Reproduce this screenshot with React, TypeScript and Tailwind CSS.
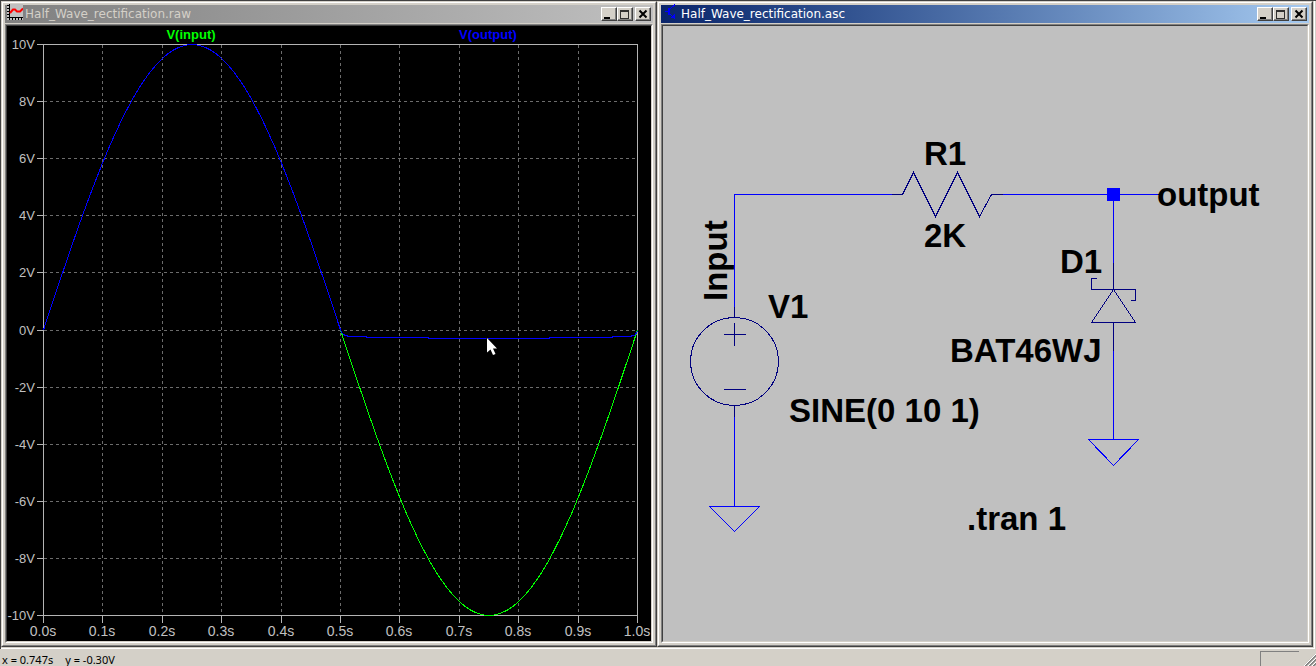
import React from 'react';

const X0 = 43;
const X1 = 637;
const Y0 = 44;
const Y1 = 615;

const timeTicks = Array.from({ length: 11 }, (_, i) => ({
  x: Math.round(X0 + ((X1 - X0) * i) / 10),
  label: `${(i / 10).toFixed(1)}s`,
}));

const voltTicks = Array.from({ length: 11 }, (_, i) => ({
  y: Math.round(Y0 + ((Y1 - Y0) * i) / 10),
  label: `${10 - 2 * i}V`,
}));

const sine = (from: number, to: number) => {
  const points: string[] = [];
  for (let i = from; i <= to; i++) {
    const x = X0 + ((X1 - X0) * i) / 100;
    const y = 329.5 - 285.5 * Math.sin((2 * Math.PI * i) / 100);
    points.push(`${x.toFixed(1)},${y.toFixed(1)}`);
  }
  return points.join(' ');
};

// once the diode conducts, the output is clamped just below 0V
const clamped =
  '341,332 343,334 345,335 349,336 366,336 366,337 428,337 428,338 549,338 549,337 612,337 612,336 628,336 634,335 637,331';

const PlotIcon: React.FC = () => (
  <svg viewBox="0 0 16 16" className="-mt-px h-4 w-4 shrink-0 self-start" shapeRendering="crispEdges" aria-hidden="true">
    <rect x="0" y="0" width="16" height="16" fill="#c0c0c0" />
    <path
      d="M2.5 0V14M2 13.5H16M0 1.5H2M0 4.5H2M0 7.5H2M0 10.5H2M0 13.5H2M2.5 14V16M5.5 14V16M8.5 14V16M11.5 14V16M14.5 14V16"
      stroke="#000"
      fill="none"
    />
    <path d="M3 9L6 5.5H8L10 7.5H13L16 4.5" stroke="#f00" strokeWidth="2" fill="none" shapeRendering="auto" />
  </svg>
);

const SchematicIcon: React.FC = () => (
  <svg viewBox="0 0 16 16" className="-mt-px h-4 w-4 shrink-0 self-start" shapeRendering="crispEdges" aria-hidden="true">
    <path d="M2 7.5H5M11.5 0V1L7 5M7 10L12 15" stroke="#00f" fill="none" />
    <path d="M6 4V11" stroke="#00f" strokeWidth="2" />
    <path d="M9 13H11V11Z" fill="#00f" stroke="#00f" />
  </svg>
);

const CaptionButton: React.FC<{ label: string; children: React.ReactNode }> = ({ label, children }) => (
  <button
    type="button"
    aria-label={label}
    className="h-[14px] w-4 border border-t-white border-l-white border-r-[#404040] border-b-[#404040] bg-[#d4d0c8] shadow-[inset_-1px_-1px_0_#808080]"
  >
    <svg viewBox="0 0 14 12" className="block h-3 w-[14px]" shapeRendering="crispEdges">
      {children}
    </svg>
  </button>
);

type WindowProps = {
  title: string;
  active?: boolean;
  icon: React.ReactNode;
  children: React.ReactNode;
};

const MdiWindow: React.FC<WindowProps> = ({ title, active, icon, children }) => (
  <section className="flex min-w-0 flex-1 border border-t-[#d4d0c8] border-l-[#d4d0c8] border-r-[#404040] border-b-[#404040]">
    <div className="flex min-w-0 flex-1 flex-col border border-t-white border-l-white border-r-[#808080] border-b-[#808080] bg-[#d4d0c8] p-[2px]">
      <header
        className={
          active
            ? 'flex h-[18px] shrink-0 items-center bg-linear-to-r from-[#0a246a] to-[#a6caf0] px-[2px]'
            : 'flex h-[18px] shrink-0 items-center bg-linear-to-r from-[#808080] to-[#c0c0c0] px-[2px]'
        }
      >
        {icon}
        <h2
          className={
            active
              ? 'ml-[2px] flex-1 truncate font-["DejaVu_Sans"] text-[12px] leading-[20px] text-white'
              : 'ml-[2px] flex-1 truncate font-["DejaVu_Sans"] text-[12px] leading-[20px] text-[#d4d0c8]'
          }
        >
          {title}
        </h2>
        <div className="flex">
          <CaptionButton label="Minimize">
            <rect x="2" y="9" width="6" height="2" fill="#000" />
          </CaptionButton>
          <CaptionButton label="Maximize">
            <path d="M2.5 2.5H10.5V10.5H2.5ZM2 3.5H11" stroke="#303030" fill="none" />
          </CaptionButton>
          <div className="w-[2px]" />
          <CaptionButton label="Close">
            <path d="M3.5 2.5L10.5 9.5M10.5 2.5L3.5 9.5" stroke="#000" strokeWidth="2" fill="none" shapeRendering="auto" />
          </CaptionButton>
        </div>
      </header>
      <div className="mt-px flex min-h-0 flex-1 border border-t-[#808080] border-l-[#808080] border-r-white border-b-white">
        <div className="flex min-w-0 flex-1 border border-t-[#404040] border-l-[#404040] border-r-[#d4d0c8] border-b-[#d4d0c8]">
          {children}
        </div>
      </div>
    </div>
  </section>
);

const Waveform: React.FC = () => (
  <svg viewBox="7 26 644 615" className='h-full w-full bg-black font-["Liberation_Sans"]' role="img" aria-label="Waveforms">
    <g transform="translate(.5 .5)" shapeRendering="crispEdges" fill="none">
      <g stroke="#6c6c6c" strokeDasharray="3 3">
        {timeTicks.slice(1, -1).map(({ x }) => (
          <line key={x} x1={x} y1={Y0} x2={x} y2={Y1} />
        ))}
        {voltTicks.slice(1, -1).map(({ y }) => (
          <line key={y} x1={X0} y1={y} x2={X1} y2={y} />
        ))}
      </g>
      <g stroke="#b4b4b4">
        <rect x={X0} y={Y0} width={X1 - X0} height={Y1 - Y0} />
        {timeTicks.map(({ x }) => (
          <line key={x} x1={x} y1={Y1} x2={x} y2={Y1 + 7} />
        ))}
        {voltTicks.map(({ y }) => (
          <line key={y} x1={X0 - 7} y1={y} x2={X0} y2={y} />
        ))}
      </g>
      <polyline points={sine(50, 100)} stroke="#00ff00" />
      <polyline points={`${sine(0, 50)} ${clamped}`} stroke="#0000ff" />
    </g>
    <g fill="#c0c0c0" fontSize="14">
      {timeTicks.map(({ x, label }) => (
        <text key={x} x={x} y="636" textAnchor="middle">
          {label}
        </text>
      ))}
    </g>
    <g fill="#c0c0c0" fontSize="13">
      {voltTicks.map(({ y, label }) => (
        <text key={y} x="35" y={y + 5} textAnchor="end">
          {label}
        </text>
      ))}
    </g>
    <g fontSize="13" fontWeight="bold" textAnchor="middle">
      <text x="191" y="39" fill="#00ff00">
        V(input)
      </text>
      <text x="488" y="39" fill="#0000ff">
        V(output)
      </text>
    </g>
    <path
      d="M487 338V352.5L490.5 349.5L493 355L495.5 354L493 348.5H497Z"
      fill="#fff"
      stroke="#000"
      strokeWidth="1"
      paintOrder="stroke"
    />
  </svg>
);

const Schematic: React.FC = () => (
  <svg viewBox="663 26 644 615" className='h-full w-full bg-[#c0c0c0] font-["Liberation_Sans"]' role="img" aria-label="Schematic">
    <g transform="translate(.5 .5)" shapeRendering="crispEdges" fill="none">
      {/* wires */}
      <g stroke="#0000ff">
        <path d="M734 307V194H892M1002 194H1159M1113 194V262M1113 349V439M734 416V506" />
        <path d="M709 506H759L734 531ZM1088 439H1138L1113 465Z" />
      </g>
      {/* components */}
      <g stroke="#000080">
        <path d="M891 194H902L913 172L935 216L957 172L979 216L991 194H1002" />
        <path d="M734 306V317M734 405V416M734 322V345M723 334H745M723 389H745" />
        <circle cx="734" cy="361" r="44" />
        <path d="M1113 262V289M1096 278H1091V289H1135V300H1130M1113 289L1091 322H1135ZM1113 322V350" />
      </g>
    </g>
    <rect x="1107" y="188" width="13" height="13" fill="#0000ff" />
    <g fontSize="33" fontWeight="bold" fill="#000">
      <text x="924" y="165">R1</text>
      <text x="924" y="247">2K</text>
      <text x="768" y="318">V1</text>
      <text x="1060" y="273">D1</text>
      <text x="950" y="362">BAT46WJ</text>
      <text x="789" y="422">SINE(0 10 1)</text>
      <text x="967" y="530">.tran 1</text>
      <text x="1157" y="206">output</text>
      <text transform="translate(727 301) rotate(-90)">Input</text>
    </g>
  </svg>
);

const StatusBar: React.FC = () => (
  <footer className='flex h-[17px] shrink-0 overflow-hidden bg-[#d4d0c8] pt-[2px] font-["Noto_Sans"] text-[11px] leading-[18px] text-black'>
    <p className="flex gap-3 pl-[2px]">
      <span>x = 0.747s</span>
      <span>y = -0.30V</span>
    </p>
    <div className="ml-auto h-5 w-[39px] border-t border-l border-[#808080]" />
    <svg viewBox="0 0 17 15" className="h-[15px] w-[17px]" aria-hidden="true">
      <path d="M6 15L17 4M10 15L17 8M14 15L17 12" stroke="#808080" strokeWidth="2" />
      <path d="M5 15L17 3M9 15L17 7M13 15L17 11" stroke="#fff" />
    </svg>
  </footer>
);

const App: React.FC = () => {
  return (
    <main className="flex h-screen flex-col overflow-hidden bg-[#d4d0c8]">
      <div className="flex min-h-0 flex-1 border-t border-l border-[#404040] pr-px">
        <div className="flex min-w-0 flex-1 border-r border-b border-white pr-px pb-px">
          <MdiWindow title="Half_Wave_rectification.raw" icon={<PlotIcon />}>
            <Waveform />
          </MdiWindow>
          <MdiWindow title="Half_Wave_rectification.asc" icon={<SchematicIcon />} active>
            <Schematic />
          </MdiWindow>
        </div>
      </div>
      <StatusBar />
    </main>
  );
};

export default App;
